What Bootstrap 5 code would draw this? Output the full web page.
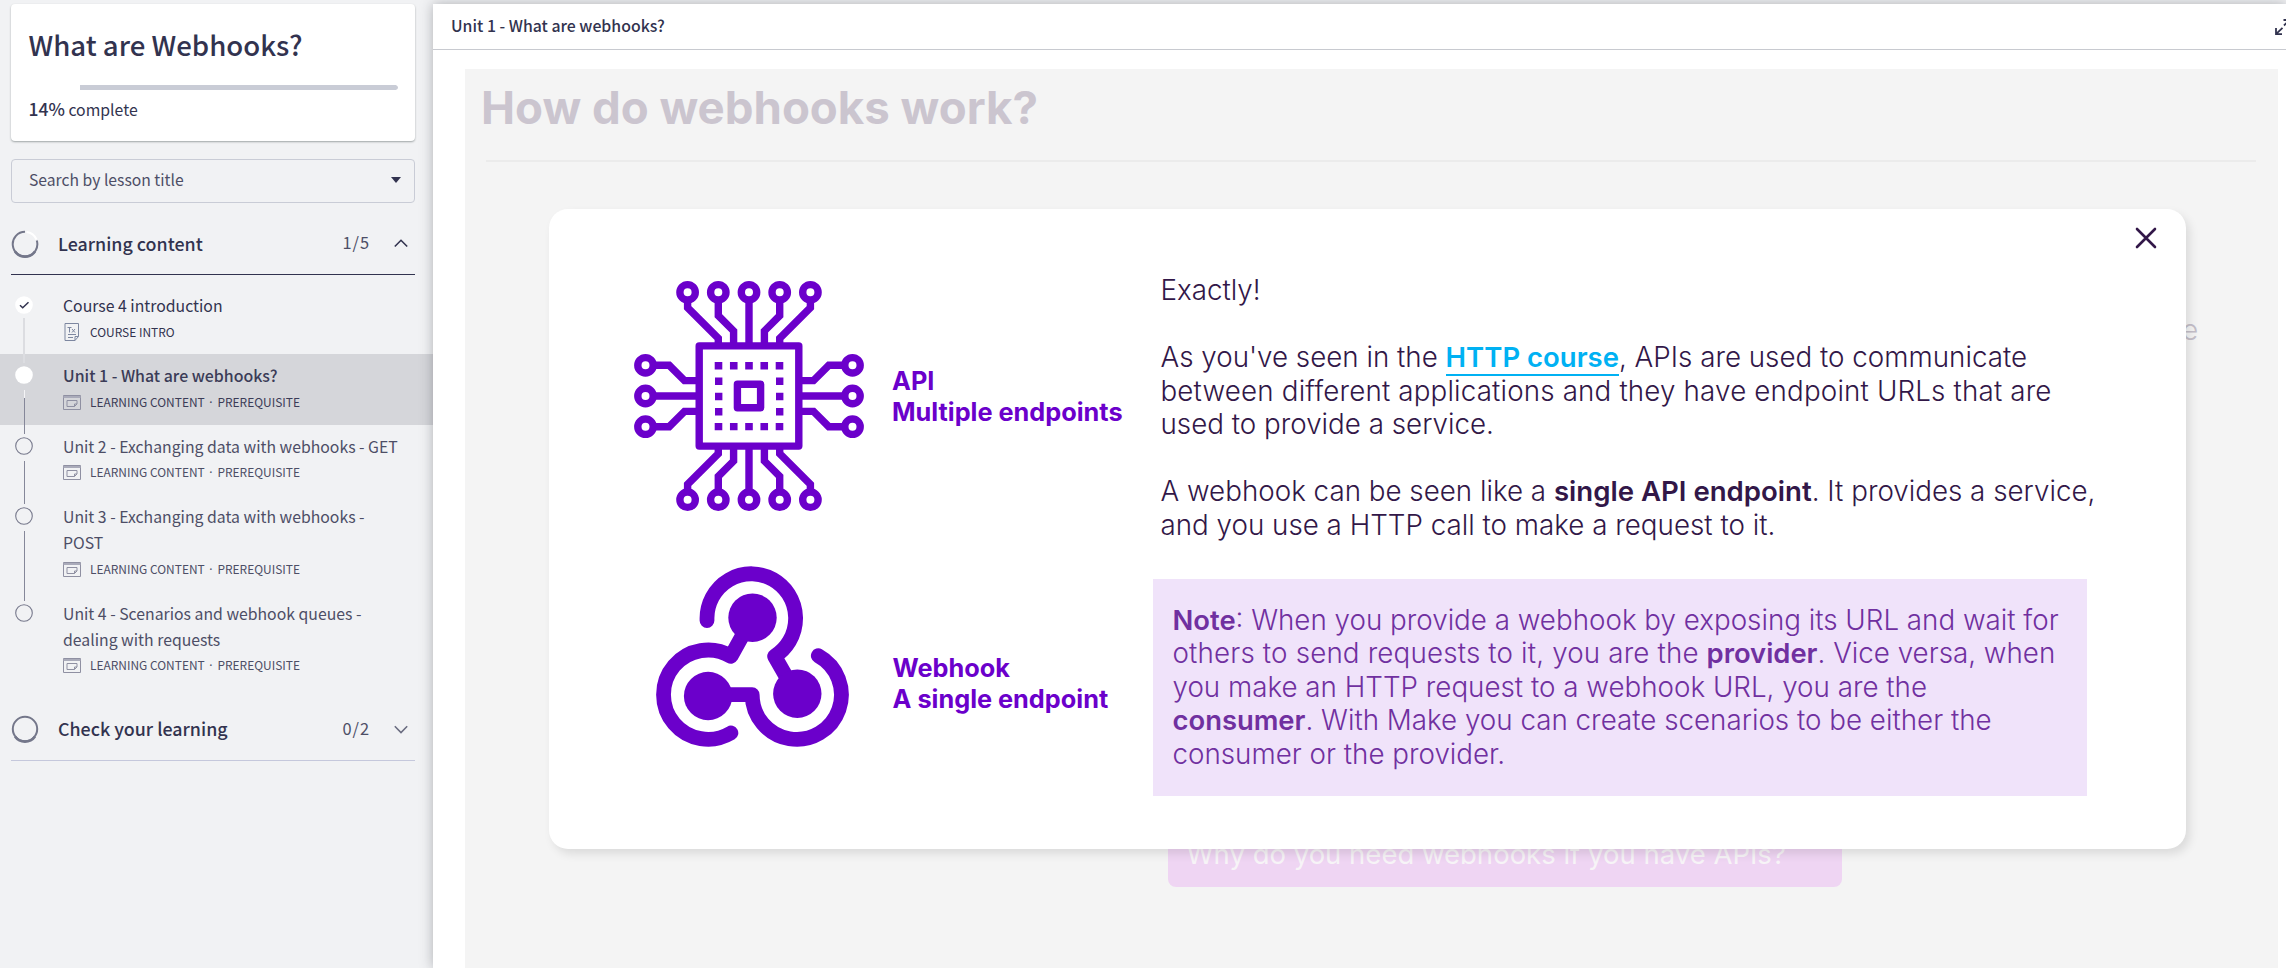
<!DOCTYPE html>
<html lang="en">
<head>
<meta charset="utf-8">
<meta name="viewport" content="width=device-width, initial-scale=1">
<title>What are Webhooks?</title>
<link href="https://cdn.jsdelivr.net/npm/bootstrap@5.3.0/dist/css/bootstrap.min.css" rel="stylesheet">
<style>
  :root { --ink: #32334f; --muted-ink: #4d4e66; --rule: #c9ccd6; --violet: #6b00cb; }
  body { height: 968px; background: #f1f2f4; color: var(--ink); font-family: "Noto Sans CJK SC", sans-serif; font-size: 15.8px; }
  h1, h2, h3, p { margin: 0; }
  .fw-medium { font-weight: 500; }

  /* Sidebar */
  .course-nav { width: 433px; padding-top: 4px; }
  .course-nav .inset { margin-left: 11px; width: 404px; }
  .course-card { height: 137px; border: 0; border-radius: 4px; box-shadow: 0 1px 2px rgba(60,70,70,.45); padding: 22px 17px 0 17.5px; }
  .course-title { font-size: 27.6px; line-height: 36px; font-weight: 500; }
  .course-progress { height: 5px; margin-top: 23px; background: #fff; border-radius: 3px; }
  .course-progress .rest { background: var(--rule); border-radius: 0 3px 3px 0; margin-left: auto; }
  .complete-line { line-height: 26px; margin-top: 6px; }
  .complete-line .fw-medium { font-size: 17.500px; }
  .lesson-search { margin-top: 18px; height: 44px; border: 1px solid var(--rule); border-radius: 4px; padding: 0 13px 2px 17px; font-size: 15.7px; background: none; color: var(--muted-ink); }
  .section-head { height: 72px; padding: 10px 7px 0 0; border-bottom: 1px solid var(--ink); }
  .section-head.closed { border-color: #c5c8dc; }
  .section-head h2 { font-size: 17.85px; font-weight: 500; line-height: 24px; margin: 0 0 2px 19px; }
  .section-head .count { font-size: 16.4px; letter-spacing: 1px; color: var(--muted-ink); margin: 0 24px 2px 0; }

  .lessons { margin-top: 9px; }
  .lesson { padding: 0 0 0 15px; color: var(--muted-ink); }
  .lesson.done { color: var(--ink); }
  .lesson.current { background: #d5d6da; color: #3b3c57; }
  .marker { width: 18px; padding-top: 12px; }
  .marker svg { display: block; }
  .marker .rail { width: 1px; background: #858799; margin: 6px 0 -9px 0; }
  .lesson.done .rail { background: #dcdde1; width: 2px; margin-top: 4px; }
  .lesson.current .rail { background: linear-gradient(#f4f4f6 8px, #858799 8px); }
  .lesson-text { margin-left: 30px; padding: 9px 0 12.4px; }
  .lesson-text h3 { font-size: 15.8px; line-height: 26px; font-weight: 400; color: inherit; white-space: nowrap; }
  .lesson.current h3 { font-weight: 500; font-size: 15.9px; }
  .meta-line { margin-top: 3px; height: 20px; line-height: 20px; font-size: 11.95px; }
  .meta-line svg { width: 18px; margin-right: 9px; flex: none; }
  .meta-line .sep { font-family: "Noto Sans", sans-serif; margin: 0 5px 0 4.500px; }
  .section-head.closed-gap { margin-top: 1px; }

  /* Main panel */
  .player { margin-top: 4px; background: #fff; box-shadow: 0 0 12px rgba(50,51,60,.35); }
  .player-bar { height: 46px; border-bottom: 1px solid #c8cad0; padding-left: 18px; padding-bottom: 2px; }
  .player-bar h2 { font-size: 15.85px; font-weight: 500; }
  .slide { margin: 19px 8px 0 32px; background: #f4f4f4; font-family: Inter, sans-serif; }
  .slide-title { font-size: 45.6px; font-weight: 700; line-height: 50px; color: #cbc5cf; padding: 14px 0 0 16px; }
  .slide-rule { height: 2px; margin: 27px 22px 0 21px; background: #ebebeb; }
  .hidden-word { left: 1717px; top: 243.500px; font-size: 28px; line-height: 34px; font-weight: 300; color: #c4bfc9; }
  .question-btn { left: 703px; top: 752px; width: 674px; height: 66px; border-radius: 8px; background: #efd5f3; color: #f7f4f7; font-size: 27.5px; line-height: 34px; padding: 16px 0 0 18.5px; }
  .popup { left: 84px; top: 140px; width: 1637px; height: 640px; background: #fff; border-radius: 19px; box-shadow: 4px 5px 10px rgba(0,0,0,.1); }
  .popup-close { right: 29px; top: 18px; }
  .pictures { width: 603.5px; padding: 71px 0 0 83.5px; color: var(--violet); }
  .pictures p { font-size: 25.3px; font-weight: 700; line-height: 31px; white-space: nowrap; }
  .api-label { padding-top: 85px; margin-left: 27.5px; }
  .hook-label { padding-top: 86.5px; margin-left: 43px; }
  .prose { color: #321748; font-size: 27.75px; line-height: 33.5px; font-weight: 300; padding-top: 65px; white-space: nowrap; }
  .prose .spoken { padding-left: 8px; }
  .prose p + p { margin-top: 33.5px; }
  .prose strong { font-weight: 600; font-size: 27.6px; }
  .prose a { color: #00b1f3; font-weight: 600; font-size: 27.5px; text-decoration: none; border-bottom: 2px solid #00b1f3; }
  .loose { letter-spacing: .16px; }
  .note { margin-top: 37px; width: 934px; height: 217px; background: #f0e3fa; color: #7030a0; padding: 24.5px 0 0 20px; }
  .note strong { font-size: 27.4px; }
</style>
</head>
<body class="d-flex overflow-hidden">

<svg class="d-none">
  <symbol id="slide-icon" viewBox="0 0 18 15"><g fill="none" stroke="#8f90a2"><path d="M.5.5h17v14H.5z"/><path d="M.5 2h17" stroke="#aaabba" stroke-width="2"/><path d="M4 5.500h10v3.500l-2.500 2.500H4zM14 9h-2.500v2.500"/></g></symbol>
  <symbol id="ring" viewBox="0 0 18 18"><circle cx="9" cy="9" r="8.300" fill="none" stroke="#77798c" stroke-width="1.100"/></symbol>
</svg>

<aside class="course-nav flex-shrink-0">
  <div class="card course-card inset">
    <h1 class="course-title">What are Webhooks?</h1>
    <div class="progress course-progress"><div class="progress-bar rest" style="width:86%"></div></div>
    <p class="complete-line"><span class="fw-medium">14%</span> complete</p>
  </div>

  <div class="lesson-search inset d-flex align-items-center justify-content-between">
    <span>Search by lesson title</span>
    <svg width="10" height="6"><path d="M0 0h10L5 6z" fill="#32334f"/></svg>
  </div>

  <div class="section-head inset d-flex align-items-center">
    <svg width="28" height="28" viewBox="0 0 28 28" fill="none"><path d="M14 1.800A12.300 12.300 0 1 0 25.800 10.500" stroke="#74778a" stroke-width="2"/><path d="M4 21.500A12.300 12.300 0 0 0 24 21.500" stroke="#74778a" stroke-width="2.600"/><path d="M15.500 1.900A12.300 12.300 0 0 1 25.500 9.500" stroke="#fff" stroke-width="2"/></svg>
    <h2>Learning content</h2>
    <span class="count ms-auto">1/5</span>
    <svg width="14" height="9" fill="none" stroke="#32334f" stroke-width="1.600"><path d="M.8 7.500 7 1.300l6.200 6.200"/></svg>
  </div>

  <div class="lessons">
    <div class="lesson done d-flex">
      <div class="marker d-flex flex-column align-items-center">
        <svg width="18" height="18"><circle cx="9" cy="9" r="8.800" fill="#fff"/><path d="m5 9.300 2.700 2.500L13.500 6.300" fill="none" stroke="#32334f" stroke-width="1.500"/></svg>
        <div class="rail flex-grow-1"></div>
      </div>
      <div class="lesson-text">
        <h3>Course 4 introduction</h3>
        <div class="meta-line d-flex align-items-center">
          <svg height="18" viewBox="0 0 18 18" fill="none" stroke="#7d87a0"><path d="M2 .5h13.500v13l-3.500 4H2zM15.500 13.500H12v4M5 11.500h8M5 14.500h5"/><path d="M4.500 4.500h4M6.500 4.500v5M9 6l3 3.500M12 6 9 9.500"/></svg>
          <span>COURSE INTRO</span>
        </div>
      </div>
    </div>
    <div class="lesson current d-flex">
      <div class="marker d-flex flex-column align-items-center">
        <svg width="18" height="18"><circle cx="9" cy="9" r="8.800" fill="#fff"/></svg>
        <div class="rail flex-grow-1"></div>
      </div>
      <div class="lesson-text">
        <h3>Unit 1 - What are webhooks?</h3>
        <div class="meta-line d-flex align-items-center"><svg height="15"><use href="#slide-icon"/></svg><span>LEARNING CONTENT<span class="sep">·</span>PREREQUISITE</span></div>
      </div>
    </div>
    <div class="lesson d-flex">
      <div class="marker d-flex flex-column align-items-center">
        <svg width="18" height="18"><use href="#ring"/></svg>
        <div class="rail flex-grow-1"></div>
      </div>
      <div class="lesson-text">
        <h3>Unit 2 - Exchanging data with webhooks - GET</h3>
        <div class="meta-line d-flex align-items-center"><svg height="15"><use href="#slide-icon"/></svg><span>LEARNING CONTENT<span class="sep">·</span>PREREQUISITE</span></div>
      </div>
    </div>
    <div class="lesson d-flex">
      <div class="marker d-flex flex-column align-items-center">
        <svg width="18" height="18"><use href="#ring"/></svg>
        <div class="rail flex-grow-1"></div>
      </div>
      <div class="lesson-text">
        <h3>Unit 3 - Exchanging data with webhooks -<br>POST</h3>
        <div class="meta-line d-flex align-items-center"><svg height="15"><use href="#slide-icon"/></svg><span>LEARNING CONTENT<span class="sep">·</span>PREREQUISITE</span></div>
      </div>
    </div>
    <div class="lesson d-flex">
      <div class="marker"><svg width="18" height="18"><use href="#ring"/></svg></div>
      <div class="lesson-text">
        <h3>Unit 4 - Scenarios and webhook queues -<br>dealing with requests</h3>
        <div class="meta-line d-flex align-items-center"><svg height="15"><use href="#slide-icon"/></svg><span>LEARNING CONTENT<span class="sep">·</span>PREREQUISITE</span></div>
      </div>
    </div>
  </div>

  <div class="section-head closed closed-gap inset d-flex align-items-center">
    <svg width="28" height="28" viewBox="0 0 28 28" fill="none" stroke="#74778a"><circle cx="14" cy="14" r="12.200" stroke-width="2"/><path d="M4 21.500A12.300 12.300 0 0 0 24 21.500" stroke-width="2.600"/></svg>
    <h2>Check your learning</h2>
    <span class="count ms-auto">0/2</span>
    <svg width="14" height="9" fill="none" stroke="#6a6c80" stroke-width="1.600"><path d="M.8 1.300 7 7.500l6.200-6.200"/></svg>
  </div>
</aside>

<main class="player flex-grow-1 d-flex flex-column">
  <header class="player-bar d-flex align-items-center justify-content-between">
    <h2 class="mb-0">Unit 1 - What are webhooks?</h2>
    <svg class="mt-1" width="12" height="20" fill="none" stroke="#32334f" stroke-width="1.800"><path d="M2 10v6.200H8M2.500 15.700 8.500 9.800M10 7.500l6-6M9.500 2H15"/></svg>
  </header>

  <section class="slide flex-grow-1 position-relative">
    <h1 class="slide-title">How do webhooks work?</h1>
    <div class="slide-rule"></div>
    <span class="hidden-word position-absolute">e</span>
    <div class="question-btn position-absolute">Why do you need webhooks if you have APIs?</div>

    <div class="popup position-absolute d-flex">
      <svg class="popup-close position-absolute" width="22" height="22" fill="none" stroke="#321748" stroke-width="2.600" stroke-linecap="round"><path d="m2 2 18 18M20 2 2 20"/></svg>

      <div class="pictures flex-shrink-0">
        <div class="d-flex">
          <svg class="flex-shrink-0" width="232" height="232" viewBox="-116 -116 232 232" fill="none" stroke="#6b00cb" stroke-width="7.400" stroke-linejoin="round">
            <defs>
              <g id="pins"><circle cx="-61.400" cy="-103.700" r="7.700"/><circle cx="-30.700" cy="-103.700" r="7.700"/>
                <path stroke-linejoin="miter" d="M-61.400-94v5.700L-30.700-57.600V-48M-30.700-94v13.700L-15.400-65v16"/></g>
              <g id="side-pins"><circle cx="-103.500" cy="-30.700" r="7.700"/><path stroke-linejoin="miter" d="M-94-30.700h14.200L-64.500-15.400H-50"/></g>
            </defs>
            <use href="#pins"/><use href="#pins" transform="scale(-1 1)"/><use href="#pins" transform="scale(1 -1)"/><use href="#pins" transform="scale(-1 -1)"/>
            <use href="#side-pins"/><use href="#side-pins" transform="scale(-1 1)"/><use href="#side-pins" transform="scale(1 -1)"/><use href="#side-pins" transform="scale(-1 -1)"/>
            <circle cy="-103.700" r="7.700"/><circle cy="103.700" r="7.700"/><circle cx="-103.500" r="7.700"/><circle cx="103.500" r="7.700"/>
            <path d="M0-94v44M0 94V50M-94 0h44M94 0H50"/>
            <rect x="-49.800" y="-50.100" width="99.600" height="100.200"/>
            <rect x="-11.600" y="-11.700" width="23.200" height="23.400"/>
            <g stroke-dasharray="7.600 7.650"><path d="M-34.300-30.200H35M-34.300 30.600H35M-30.300-18.500V27M30.700-18.500V27"/></g>
          </svg>
          <p class="api-label">API<br>Multiple endpoints</p>
        </div>
        <div class="hook-row d-flex" style="margin-top:53px;padding-left:23px">
          <svg class="flex-shrink-0" width="194" height="184" viewBox="656 567 194 184" fill="none" stroke="#6b00cb" stroke-width="14.800" stroke-linecap="round" stroke-linejoin="round">
            <path d="M707 622.500V620a44.300 44.600 0 1 1 67.600 38.300l22 38.400"/>
            <path d="M730.900 735a44.600 44.600 0 1 1 0-76.700l20-36"/>
            <path d="M818.300 657.700a44.600 44.600 0 1 1-66.100 39H708"/>
            <g fill="#6b00cb" stroke="none"><circle cx="752.500" cy="619.700" r="24.200"/><circle cx="708.100" cy="698" r="24.200"/><circle cx="797.300" cy="695.700" r="24.200"/></g>
          </svg>
          <p class="hook-label">Webhook<br>A single endpoint</p>
        </div>
      </div>

      <div class="prose">
        <div class="spoken">
          <p>Exactly!</p>
          <p>As you've seen in the <a href="#">HTTP course</a>, APIs are used to communicate<br><span class="loose">between different applications and they have endpoint URLs that are</span><br>used to provide a service.</p>
          <p>A webhook can be seen like a <strong>single API endpoint</strong>. It provides a service,<br>and you use a HTTP call to make a request to it.</p>
        </div>
        <div class="note"><strong>Note</strong>: When you provide a webhook by exposing its URL and wait for<br><span class="loose">others to send requests to it, you are the</span> <strong>provider</strong>. Vice versa, when<br>you make an HTTP request to a webhook URL, you are the<br><strong>consumer</strong>. With Make you can create scenarios to be either the<br>consumer or the provider.</div>
      </div>
    </div>
  </section>
</main>

<script src="https://cdn.jsdelivr.net/npm/bootstrap@5.3.0/dist/js/bootstrap.bundle.min.js"></script>
</body>
</html>
